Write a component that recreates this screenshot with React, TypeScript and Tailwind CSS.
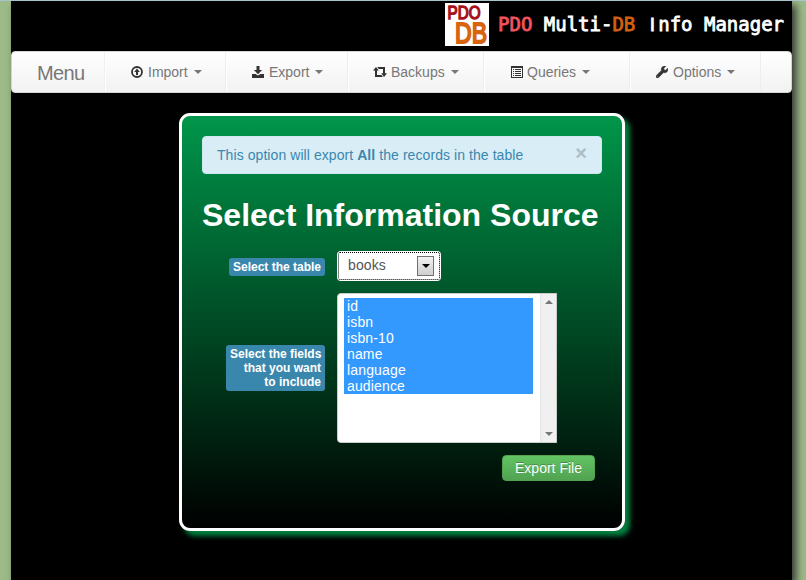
import React from "react";
import { FaWrench } from "react-icons/fa";

const ImportIcon = () => (
  <svg width="12" height="12" viewBox="0 0 12 12">
    <circle cx="6" cy="6" r="5" fill="none" stroke="#333" strokeWidth="1.8" />
    <path d="M6 2.6 8.8 5.9H7V9H5V5.9H3.2z" fill="#333" />
  </svg>
);

const ExportIcon = () => (
  <svg width="12" height="12" viewBox="0 0 12 12">
    <path d="M4.5 0h3v4h2.6L6 8.2 1.9 4h2.6zM0 8h3.5L6 9.4 8.5 8H12v4H0z" fill="#333" />
  </svg>
);

const BackupsIcon = () => (
  <svg width="14" height="10" viewBox="0 0 14 10">
    <path d="M3 0 5.8 3.6H4V8h4.4L10 10H2V3.6H0zM4.2 0H12v6.2h2L11 10 8.2 6.2H10V2H5.8z" fill="#333" />
  </svg>
);

const QueriesIcon = () => (
  <svg width="12" height="12" viewBox="0 0 12 12" shapeRendering="crispEdges">
    <path d="M0 0h12v12H0zM1 2v9h10V2z" fill="#333" fillRule="evenodd" />
    <path d="M2 3h1v1H2zM4 3h6v1H4zM2 5h1v1H2zM4 5h6v1H4zM2 7h1v1H2zM4 7h6v1H4zM2 9h1v1H2zM4 9h6v1H4z" fill="#333" />
  </svg>
);

const Caret = () => (
  <span className="ml-[6px] border-x-4 border-t-4 border-x-transparent border-t-[#777]" />
);

const items = [
  { label: "Import", icon: <ImportIcon />, box: "w-[121px] pl-[25px]", iconBox: "w-[17px]" },
  { label: "Export", icon: <ExportIcon />, box: "w-[122px] pl-[25px]", iconBox: "w-[17px]" },
  { label: "Backups", icon: <BackupsIcon />, box: "w-[136px] pl-[24px]", iconBox: "w-[18px]" },
  { label: "Queries", icon: <QueriesIcon />, box: "w-[146px] pl-[26px]", iconBox: "w-[16px]" },
  { label: "Options", icon: <FaWrench size={12} color="#333" stroke="#333" strokeWidth={25} />, box: "w-[131px] pl-[25px]", iconBox: "w-[17px]" },
];

const fields = ["id", "isbn", "isbn-10", "name", "language", "audience"];

function Logo() {
  return (
    <svg width="44" height="43" viewBox="0 0 44 43" className="bg-white">
      <g fontFamily="Liberation Sans, sans-serif" fontWeight="400">
        <text x="2.5" y="16" fontSize="18" textLength="33" lengthAdjust="spacingAndGlyphs" fill="#a5121b" stroke="#a5121b" strokeWidth="1.4">PDO</text>
        <text x="10" y="39.5" fontSize="30" textLength="32" lengthAdjust="spacingAndGlyphs" fill="#d9640f" stroke="#d9640f" strokeWidth="2">DB</text>
      </g>
    </svg>
  );
}

export default function App() {
  return (
    <div className="h-[580px] w-[806px] overflow-hidden border-t border-[#a9c4cc] bg-[#9dbb89] pl-[11px] font-['Liberation_Sans',Arial,sans-serif] text-[14px] leading-5">
      <div className="h-[580px] w-[781px] bg-black shadow-[4px_4px_8px_#333]">
        <header className="flex h-[50px] justify-end pt-[2px] pr-[8px]">
          <Logo />
          <div className="ml-[9px] w-[286px] pt-[9px] font-['DejaVu_Sans_Mono',monospace] text-[19px] leading-6 whitespace-pre text-white [-webkit-text-stroke:0.8px]">
            <span className="text-[#f5535e]">PDO</span> Multi-<span className="text-[#d4620f]">DB</span> <span className="inline-block w-[11.44px] text-center font-['Liberation_Sans',sans-serif]">I</span>nfo Manager
          </div>
        </header>

        <nav className="flex h-[42px] rounded-[4px] border border-[#d4d4d4] bg-linear-to-b from-white to-[#f2f2f2] text-[#777]">
          <div className="w-[93px] border-r border-[#f0f0f0] pt-[11px] pl-[25px] text-[20px] leading-5 tracking-[-0.6px]">Menu</div>
          {items.map((item) => (
            <div key={item.label} className={"flex items-center border-r border-[#eee] border-l border-l-white " + item.box}>
              <span className={"shrink-0 " + item.iconBox}>{item.icon}</span>
              <span>{item.label}</span>
              <Caret />
            </div>
          ))}
        </nav>

        <main className="mt-[20px] ml-[168px] h-[418px] w-[446px] rounded-[11px] border-[3px] border-white bg-[linear-gradient(to_bottom,#00964a,#000)] px-[20px] pt-[20px] shadow-[5px_5px_5px_#00803f]">
          <div className="flex h-[38px] w-[400px] items-center justify-between rounded-[4px] border border-[#cfe9f1] bg-[#d9edf7] pr-[14px] pl-[14px] text-[#3a87ad]">
            <span className="tracking-[0.07px]">This option will export <b>All</b> the records in the table</span>
            <span className="-mt-[5px] text-[20px] leading-5 font-bold text-[#aebec6]">×</span>
          </div>

          <h1 className="mt-[21px] text-[32px] leading-10 font-bold whitespace-nowrap text-white">Select Information Source</h1>

          <div className="mt-[16px] flex items-center">
            <div className="flex w-[123px] justify-end">
              <span className="mt-px h-[18px] rounded-[3px] bg-[#3a87ad] px-1 pt-[2px] text-[12px] leading-[14px] font-bold whitespace-nowrap text-white">Select the table</span>
            </div>
            <div className="ml-[12px] h-[30px] w-[104px] rounded-[4px] bg-white p-px">
              <div className="flex h-[28px] items-center justify-between rounded-[2px] border border-dotted border-black pr-[5px] pl-[9px] text-[#555]">
                <span className="-mt-[2px] tracking-[0.12px]">books</span>
                <span className="flex h-[20px] w-[17px] items-center justify-center border border-[#707070] bg-linear-to-b from-[#f2f2f2] to-[#cfcfcf]">
                  <span className="border-x-4 border-t-4 border-x-transparent border-t-black" />
                </span>
              </div>
            </div>
          </div>

          <div className="mt-[12px] flex items-center">
            <div className="flex w-[123px] justify-end">
              <span className="h-[46px] w-[99px] rounded-[3px] bg-[#3a87ad] px-1 pt-[2px] text-right text-[12px] leading-[14px] font-bold whitespace-nowrap text-white">Select the fields<br />that you want<br />to include</span>
            </div>
            <div className="ml-[12px] flex h-[150px] w-[220px] rounded-l-[4px] border border-[#ccc] bg-white">
              <div className="flex-1 pt-[4px] pr-[7px] pl-[6px]">
                {fields.map((field) => (
                  <div key={field} className="h-4 bg-[#3399ff] pl-[3px] leading-[17px] tracking-[0.15px] text-white">{field}</div>
                ))}
              </div>
              <div className="flex w-[16px] flex-col items-center justify-between border-l border-[#e3e3e3] bg-[#f0f0f0] py-[6px]">
                <span className="border-x-4 border-b-4 border-x-transparent border-b-[#777]" />
                <span className="border-x-4 border-t-4 border-x-transparent border-t-[#777]" />
              </div>
            </div>
          </div>

          <div className="mt-[12px] flex justify-end pr-[7px]">
            <button className="h-[26px] w-[93px] rounded-[4px] border border-[#51a351] bg-linear-to-b from-[#62c462] to-[#51a351] leading-5 text-white [text-shadow:0_-1px_0_rgba(0,0,0,0.25)]">Export File</button>
          </div>
        </main>
      </div>
    </div>
  );
}
